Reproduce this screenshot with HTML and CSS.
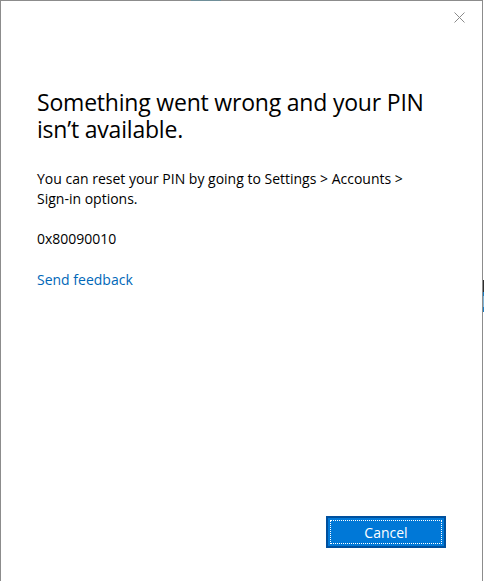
FILE: index.html
```html
<!DOCTYPE html>
<html lang="en">
<head>
<meta charset="utf-8">
<title>PIN error</title>
<link rel="stylesheet" href="styles.css">
</head>
<body>
<div class="backdrop">
  <div class="window">
    <span class="behind-tab"></span>
    <button class="close" aria-label="Close">
      <svg width="11" height="11" viewBox="0 0 11 11"><path d="M0.5 0.5 L10.5 10.5 M10.5 0.5 L0.5 10.5" stroke="#8a8a8a" stroke-width="1" fill="none"/></svg>
    </button>
    <div class="content">
      <h1 class="title">Something went wrong and your PIN isn’t available.</h1>
      <p class="text">You can reset your PIN by going to Settings &gt; Accounts &gt; <span class="nowrap">Sign-in</span> options.</p>
      <p class="text code">0x80090010</p>
      <a class="link" href="#">Send feedback</a>
    </div>
    <div class="footer">
      <button class="btn"><span class="btn-focus">Cancel</span></button>
    </div>
  </div>
  <div class="side-strip">
    <span class="strip-dark"></span>
    <span class="strip-blue"></span>
    <span class="strip-light"></span>
    <span class="strip-blue2"></span>
  </div>
</div>
</body>
</html>
```
FILE: styles.css
```css
html, body {
  margin: 0;
  padding: 0;
  background: #ffffff;
  overflow: hidden;
}
.backdrop {
  display: flex;
  width: 484px;
  height: 581px;
}
.window {
  position: relative;
  box-sizing: border-box;
  width: 483px;
  height: 600px;
  border: 1px solid #8c8c8c;
  border-bottom: none;
  background: #ffffff;
  display: flex;
  flex-direction: column;
  font-family: "Open Sans", "Noto Sans", sans-serif;
  color: #000000;
}
.behind-tab {
  position: absolute;
  top: -1px;
  left: 190px;
  width: 30px;
  height: 1px;
  background: #6f8f99;
}
.close {
  position: absolute;
  top: 11px;
  right: 17px;
  width: 11px;
  height: 11px;
  padding: 0;
  border: none;
  background: none;
  display: block;
}
.close svg { display: block; }
.content {
  padding: 88px 36px 0 36px;
}
.title {
  margin: 0 0 26px 0;
  font-size: 23px;
  font-weight: 400;
  line-height: 27px;
  letter-spacing: -0.2px;
}
.text {
  margin: 0 0 20px 0;
  font-size: 14px;
  line-height: 20px;
}
.code {
  margin-bottom: 19px;
}
.nowrap {
  white-space: nowrap;
}
.link {
  display: inline-block;
  font-size: 14px;
  line-height: 20px;
  color: #0067b8;
  text-decoration: none;
}
.footer {
  margin-top: auto;
  display: flex;
  justify-content: flex-end;
  padding: 0 36px 52px 0;
}
.btn {
  box-sizing: border-box;
  width: 120px;
  height: 32px;
  padding: 2px;
  border: 2px solid #00509e;
  background: #0078d7;
  display: flex;
  font-family: "Open Sans", "Noto Sans", sans-serif;
}
.btn-focus {
  flex: 1;
  box-sizing: border-box;
  border: 1px dotted #ffffff;
  color: #ffffff;
  font-size: 14px;
  display: flex;
  align-items: center;
  justify-content: center;
}
.side-strip {
  width: 1px;
  display: flex;
  flex-direction: column;
  padding-top: 280px;
}
.strip-dark {
  height: 12px;
  background: #2d2d2d;
}
.strip-blue {
  height: 4px;
  background: #1a7dc4;
}
.strip-light {
  height: 11px;
  background: #7fb3d6;
}
.strip-blue2 {
  height: 5px;
  background: #1a7dc4;
}
```
